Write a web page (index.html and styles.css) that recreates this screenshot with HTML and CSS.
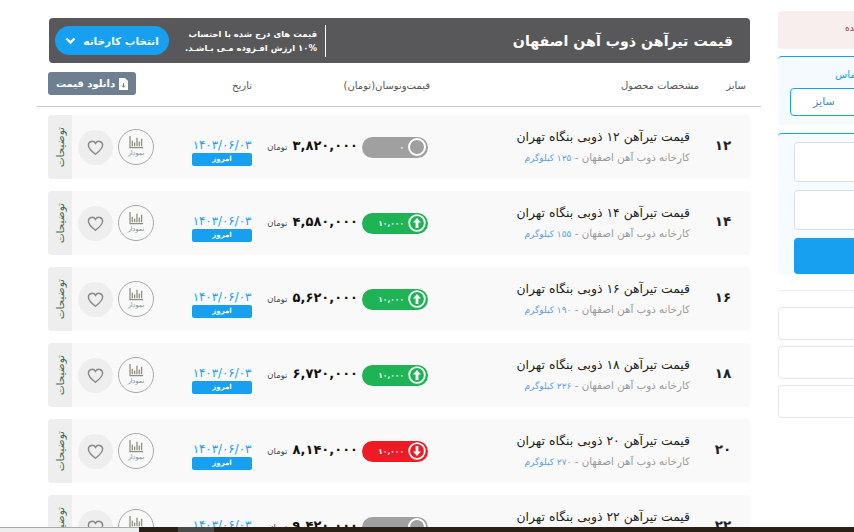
FILE: index.html
```html
<!DOCTYPE html>
<html lang="fa" dir="rtl">
<head>
    <meta charset="UTF-8">
    <title>قیمت تیرآهن ذوب آهن اصفهان</title>
    <link rel="stylesheet" href="styles.css">
</head>
<body>
    <svg class="defs" width="0" height="0">
        <symbol id="heart" viewBox="0 0 24 24"><path d="M12 20.5C5.5 15.5 3 12.5 3 9a4.800 4.800 0 0 1 9-2.300A4.800 4.800 0 0 1 21 9c0 3.500-2.500 6.500-9 11.500z" fill="none" stroke="currentColor" stroke-width="1.800"/></symbol>
        <symbol id="chart" viewBox="0 0 16 14"><path d="M1 0v12.500h14M3.500 5v6M6 7v4M8.500 2v9M11 6v5M13.500 3v8" fill="none" stroke="currentColor" stroke-width="1.400"/></symbol>
        <symbol id="up" viewBox="0 0 18 18"><circle cx="9" cy="9" r="7.800" fill="none" stroke="#fff" stroke-width="1.800"/><path d="M9 4l4 4.500h-2.600V14H7.600V8.500H5z" fill="#fff"/></symbol>
        <symbol id="down" viewBox="0 0 18 18"><circle cx="9" cy="9" r="7.800" fill="none" stroke="#fff" stroke-width="1.800"/><path d="M9 14l4-4.500h-2.600V4H7.600v5.500H5z" fill="#fff"/></symbol>
    </svg>

    <div class="page">
        <aside class="sidebar">
            <div class="alert">شده</div>
            <div class="contact">
                <div class="contact-title">تماس</div>
                <div class="size-select"><span>سایز</span></div>
            </div>
            <div class="form-box">
                <div class="field"></div>
                <div class="field"></div>
                <div class="send"></div>
            </div>
            <hr class="side-rule">
            <div class="side-list">
                <div class="side-item"></div>
                <div class="side-item"></div>
                <div class="side-item"></div>
            </div>
        </aside>

        <main class="content">
            <div class="title-bar">
                <h1>قیمت تیرآهن ذوب آهن اصفهان</h1>
                <div class="title-tools">
                    <p class="notice">قیمت های درج شده با احتساب<br>۱۰% ارزش افـزوده مـی بـاشـد.</p>
                    <button class="factory-button">انتخاب کارخانه
                        <svg width="11" height="8" viewBox="0 0 11 8"><path d="M1.500 1.500l4 4 4-4" fill="none" stroke="#fff" stroke-width="2.400"/></svg>
                    </button>
                </div>
            </div>

            <div class="table-head">
                <span class="head-size">سایز</span>
                <span class="head-spec">مشخصات محصول</span>
                <span class="head-price">قیمت‌ونوسان(تومان)</span>
                <span class="head-date">تاریخ</span>
                <button class="download">
                    <svg width="9" height="12" viewBox="0 0 9 12"><path d="M0 0h6l3 3v9H0z" fill="#fff"/><path d="M4.500 5v4M2.800 7.500l1.700 1.800 1.700-1.800" fill="none" stroke="#6f7f92"/></svg>
                    دانلود قیمت
                </button>
            </div>

            <div class="rows">
                <div class="row">
                    <div class="size">۱۲</div>
                    <div class="spec">
                        <div class="spec-title">قیمت تیرآهن ۱۲ ذوبی بنگاه تهران</div>
                        <div class="spec-sub">کارخانه ذوب آهن اصفهان - <b>۱۲۵ کیلوگرم</b></div>
                    </div>
                    <div class="change flat"><i class="ring"></i><span>۰</span></div>
                    <div class="price"><b>۳,۸۲۰,۰۰۰</b> <small>تومان</small></div>
                    <div class="date"><div>۱۴۰۳/۰۶/۰۳</div><span>امروز</span></div>
                    <div class="chart"><svg width="15" height="13"><use href="#chart"/></svg><small>نمودار</small></div>
                    <div class="like"><svg width="19" height="19"><use href="#heart"/></svg></div>
                    <div class="notes"><span>توضیحات</span></div>
                </div>
                <div class="row">
                    <div class="size">۱۴</div>
                    <div class="spec">
                        <div class="spec-title">قیمت تیرآهن ۱۴ ذوبی بنگاه تهران</div>
                        <div class="spec-sub">کارخانه ذوب آهن اصفهان - <b>۱۵۵ کیلوگرم</b></div>
                    </div>
                    <div class="change rise"><svg width="18" height="18"><use href="#up"/></svg><span>۱۰,۰۰۰</span></div>
                    <div class="price"><b>۴,۵۸۰,۰۰۰</b> <small>تومان</small></div>
                    <div class="date"><div>۱۴۰۳/۰۶/۰۳</div><span>امروز</span></div>
                    <div class="chart"><svg width="15" height="13"><use href="#chart"/></svg><small>نمودار</small></div>
                    <div class="like"><svg width="19" height="19"><use href="#heart"/></svg></div>
                    <div class="notes"><span>توضیحات</span></div>
                </div>
                <div class="row">
                    <div class="size">۱۶</div>
                    <div class="spec">
                        <div class="spec-title">قیمت تیرآهن ۱۶ ذوبی بنگاه تهران</div>
                        <div class="spec-sub">کارخانه ذوب آهن اصفهان - <b>۱۹۰ کیلوگرم</b></div>
                    </div>
                    <div class="change rise"><svg width="18" height="18"><use href="#up"/></svg><span>۱۰,۰۰۰</span></div>
                    <div class="price"><b>۵,۶۲۰,۰۰۰</b> <small>تومان</small></div>
                    <div class="date"><div>۱۴۰۳/۰۶/۰۳</div><span>امروز</span></div>
                    <div class="chart"><svg width="15" height="13"><use href="#chart"/></svg><small>نمودار</small></div>
                    <div class="like"><svg width="19" height="19"><use href="#heart"/></svg></div>
                    <div class="notes"><span>توضیحات</span></div>
                </div>
                <div class="row">
                    <div class="size">۱۸</div>
                    <div class="spec">
                        <div class="spec-title">قیمت تیرآهن ۱۸ ذوبی بنگاه تهران</div>
                        <div class="spec-sub">کارخانه ذوب آهن اصفهان - <b>۲۲۶ کیلوگرم</b></div>
                    </div>
                    <div class="change rise"><svg width="18" height="18"><use href="#up"/></svg><span>۱۰,۰۰۰</span></div>
                    <div class="price"><b>۶,۷۲۰,۰۰۰</b> <small>تومان</small></div>
                    <div class="date"><div>۱۴۰۳/۰۶/۰۳</div><span>امروز</span></div>
                    <div class="chart"><svg width="15" height="13"><use href="#chart"/></svg><small>نمودار</small></div>
                    <div class="like"><svg width="19" height="19"><use href="#heart"/></svg></div>
                    <div class="notes"><span>توضیحات</span></div>
                </div>
                <div class="row">
                    <div class="size">۲۰</div>
                    <div class="spec">
                        <div class="spec-title">قیمت تیرآهن ۲۰ ذوبی بنگاه تهران</div>
                        <div class="spec-sub">کارخانه ذوب آهن اصفهان - <b>۲۷۰ کیلوگرم</b></div>
                    </div>
                    <div class="change fall"><svg width="18" height="18"><use href="#down"/></svg><span>۱۰,۰۰۰</span></div>
                    <div class="price"><b>۸,۱۴۰,۰۰۰</b> <small>تومان</small></div>
                    <div class="date"><div>۱۴۰۳/۰۶/۰۳</div><span>امروز</span></div>
                    <div class="chart"><svg width="15" height="13"><use href="#chart"/></svg><small>نمودار</small></div>
                    <div class="like"><svg width="19" height="19"><use href="#heart"/></svg></div>
                    <div class="notes"><span>توضیحات</span></div>
                </div>
                <div class="row">
                    <div class="size">۲۲</div>
                    <div class="spec">
                        <div class="spec-title">قیمت تیرآهن ۲۲ ذوبی بنگاه تهران</div>
                        <div class="spec-sub">کارخانه ذوب آهن اصفهان - <b>۳۱۰ کیلوگرم</b></div>
                    </div>
                    <div class="change flat"><i class="ring"></i><span>۰</span></div>
                    <div class="price"><b>۹,۴۲۰,۰۰۰</b> <small>تومان</small></div>
                    <div class="date"><div>۱۴۰۳/۰۶/۰۳</div><span>امروز</span></div>
                    <div class="chart"><svg width="15" height="13"><use href="#chart"/></svg><small>نمودار</small></div>
                    <div class="like"><svg width="19" height="19"><use href="#heart"/></svg></div>
                    <div class="notes"><span>توضیحات</span></div>
                </div>
            </div>
        </main>
    </div>

    <div class="scrollbar">
        <div class="scroll-track"><div class="scroll-thumb"></div></div>
        <div class="scroll-left"></div>
    </div>
</body>
</html>
```

FILE: styles.css
```css
body, html {
    margin: 0;
    padding: 0;
    width: 100%;
    height: 100%;
    overflow: hidden;
    background: #fff;
    font-family: "DejaVu Sans", sans-serif;
}
.defs {
    display: block;
    height: 0;
}
.page {
    display: flex;
    width: 854px;
    height: 532px;
    overflow: hidden;
}

/* sidebar, cut by the window */
.sidebar {
    flex: 0 0 76px;
    width: 76px;
    padding-top: 11px;
    overflow: hidden;
}
.alert {
    width: 110px;
    height: 38px;
    box-sizing: border-box;
    padding: 12px 0 0 67px;
    margin-right: -34px;
    background: #f9eeee;
    border-radius: 4px;
    color: #8a3a3a;
    font-size: 9px;
    white-space: nowrap;
    overflow: hidden;
    text-align: left;
    direction: ltr;
}
.contact {
    width: 110px;
    height: 69px;
    box-sizing: border-box;
    margin: 7px -34px 0 0;
    padding-top: 12px;
    background: #f4fafe;
    border-top: 1px solid #16a0ef;
    border-radius: 4px;
    direction: ltr;
}
.contact-title {
    padding-left: 57px;
    color: #16a0ef;
    font-size: 10px;
}
.size-select {
    width: 90px;
    height: 28px;
    box-sizing: border-box;
    margin: 8px 0 0 12px;
    padding: 6px 0 0 22px;
    background: #fff;
    border: 1px solid #16a0ef;
    border-radius: 4px;
    color: #3a8dc4;
    font-size: 11px;
}
.form-box {
    width: 110px;
    height: 142px;
    box-sizing: border-box;
    margin: 8px -34px 0 0;
    padding: 8px 0 0 16px;
    background: #f6fbff;
    border-top: 1px solid #16a0ef;
    border-radius: 4px;
    direction: ltr;
}
.field {
    height: 40px;
    margin-bottom: 8px;
    background: #fff;
    border: 1px solid #ddd;
    border-radius: 4px;
    box-sizing: border-box;
}
.send {
    height: 36px;
    background: #16a0ef;
    border-radius: 4px;
}
.side-rule {
    width: 110px;
    margin: 15px -34px 16px 0;
    border: 0;
    border-top: 1px solid #eee;
}
.side-item {
    width: 110px;
    height: 33px;
    box-sizing: border-box;
    margin: 0 -34px 6px 0;
    background: #fff;
    border: 1px solid #e6e6e6;
    border-radius: 4px;
}

/* main column */
.content {
    flex: 0 0 724px;
    width: 724px;
    margin-right: 17px;
    padding-top: 18px;
    box-sizing: border-box;
}
.title-bar {
    display: flex;
    align-items: center;
    justify-content: space-between;
    width: 701px;
    height: 45px;
    margin: 0 11px;
    box-sizing: border-box;
    padding: 0 17px 0 6px;
    background: #58585a;
    border-radius: 4px;
    color: #fff;
}
.title-bar h1 {
    margin: 0;
    font-size: 14.200px;
    font-weight: bold;
    white-space: nowrap;
}
.title-tools {
    display: flex;
    align-items: center;
    gap: 16px;
}
.notice {
    margin: 0;
    padding: 2px 8px 2px 0;
    border-right: 1px solid #fff;
    font-size: 8.500px;
    line-height: 14px;
    white-space: nowrap;
    font-weight: bold;
}
.factory-button {
    display: flex;
    align-items: center;
    justify-content: center;
    gap: 7px;
    width: 114px;
    height: 29px;
    padding: 0;
    background: #16a0ef;
    border: 0;
    border-radius: 15px;
    color: #fff;
    font-family: inherit;
    font-size: 10.500px;
    font-weight: bold;
}
.table-head {
    display: flex;
    align-items: center;
    height: 43px;
    padding: 0 15px 0 11px;
    border-bottom: 1px solid #ccc;
    color: #555;
    font-size: 10px;
}
.table-head span {
    padding-top: 1px;
    white-space: nowrap;
}
.head-size {
    width: 47px;
}
.head-spec {
    width: 269px;
}
.head-price {
    width: 178px;
}
.head-date {
    width: 100px;
}
.download {
    display: flex;
    align-items: center;
    justify-content: center;
    gap: 4px;
    flex: 0 0 88px;
    height: 23px;
    padding: 0;
    margin-right: auto;
    margin-bottom: 2px;
    background: #6f7f92;
    border: 0;
    border-radius: 3px;
    color: #fff;
    font-family: inherit;
    font-size: 10px;
    font-weight: bold;
}
.rows {
    display: flex;
    flex-direction: column;
    gap: 12px;
    width: 702px;
    margin: 8px 11px 0 0;
}
.row {
    display: flex;
    align-items: center;
    flex: 0 0 64px;
    background: #f9f9f9;
    border-radius: 4px;
    overflow: hidden;
}
.size {
    flex: 0 0 60px;
    box-sizing: border-box;
    padding-left: 6px;
    margin-top: -5px;
    text-align: center;
    font-size: 13.500px;
    font-weight: bold;
    color: #222;
}
.spec {
    flex: 0 0 262px;
}
.spec-title {
    margin-top: -3px;
    font-size: 12.400px;
    color: #222;
    white-space: nowrap;
}
.spec-sub {
    margin-top: 7px;
    font-size: 10.300px;
    color: #999;
    white-space: nowrap;
}
.spec-sub b {
    font-size: 9px;
    font-weight: normal;
    color: #5b9fe8;
}
.change {
    display: flex;
    align-items: center;
    gap: 4px;
    flex: 0 0 66px;
    box-sizing: border-box;
    height: 21px;
    padding: 0 2px 0 0;
    border-radius: 11px;
    color: #fff;
    font-size: 7.500px;
    font-weight: bold;
}
.flat {
    background: #a0a0a0;
}
.rise {
    background: #1eb455;
}
.fall {
    background: #ed1c24;
}
.ring {
    width: 18px;
    height: 18px;
    box-sizing: border-box;
    border: 2px solid #fff;
    border-radius: 50%;
}
.price {
    flex: 0 0 110px;
    box-sizing: border-box;
    padding-right: 4px;
    margin-top: -6px;
    white-space: nowrap;
}
.price b {
    font-size: 13px;
    color: #111;
}
.price small {
    font-size: 8.500px;
    color: #444;
}
.date {
    flex: 0 0 60px;
    margin-top: 10px;
    text-align: center;
    color: #18a0ee;
    font-size: 11.800px;
    line-height: 14px;
    white-space: nowrap;
}
.date span {
    display: block;
    height: 13px;
    margin-top: 1px;
    background: #16a0ef;
    border-radius: 2px;
    color: #fff;
    font-size: 7px;
    font-weight: bold;
    line-height: 12px;
}
.chart {
    display: flex;
    flex-direction: column;
    align-items: center;
    justify-content: center;
    flex: 0 0 36px;
    height: 36px;
    box-sizing: border-box;
    margin-right: 38px;
    border: 1px solid #aaa;
    border-radius: 50%;
    color: #8f8f7f;
}
.chart small {
    font-size: 6.500px;
    color: #888;
    line-height: 9px;
}
.like {
    display: flex;
    align-items: center;
    justify-content: center;
    flex: 0 0 35px;
    height: 35px;
    margin-right: 5px;
    background: #eee;
    border-radius: 50%;
    color: #888;
}
.notes {
    display: flex;
    align-items: center;
    justify-content: center;
    flex: 0 0 24px;
    height: 64px;
    margin-right: 6px;
    background: #eee;
    color: #3f6b52;
    font-size: 10.500px;
}
.notes span {
    writing-mode: vertical-rl;
    transform: rotate(180deg);
    white-space: nowrap;
}

/* horizontal scrollbar of the window */
.scrollbar {
    position: fixed;
    left: 0;
    right: 0;
    bottom: 0;
    display: flex;
    flex-direction: row-reverse;
    height: 5px;
    direction: ltr;
}
.scroll-track {
    flex: 1;
    padding-left: 39px;
    background: #2a2018;
}
.scroll-thumb {
    width: 36px;
    height: 5px;
    background: #4a4a4a;
}
.scroll-left {
    flex: 0 0 139px;
    box-sizing: border-box;
    background: #eee;
    border-top: 1px solid #aaa;
}
```
